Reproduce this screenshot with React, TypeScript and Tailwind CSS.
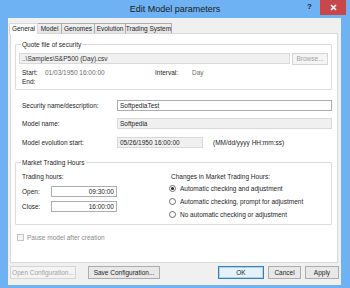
import React from "react";

function Group({ title, className, children }: { title: string; className?: string; children: React.ReactNode }) {
  return (
    <div className={"border border-[#dcdcdc] rounded-[1px] " + (className ?? "")}>
      <div className="h-0 overflow-visible">
        <span className="relative -top-[5px] ml-[5px] bg-white px-[1px] leading-[9px] text-[#1e1e1e]">{title}</span>
      </div>
      {children}
    </div>
  );
}

function Radio({ checked, label }: { checked?: boolean; label: string }) {
  return (
    <div className="flex h-[13px] items-center">
      <span className="flex h-[7px] w-[7px] items-center justify-center rounded-full border border-[#707070] bg-white">
        {checked && <span className="h-[3px] w-[3px] rounded-full bg-[#222]" />}
      </span>
      <span className="ml-[4px] text-[#1e1e1e]">{label}</span>
    </div>
  );
}

function Btn({ children, w, disabled, def }: { children: React.ReactNode; w: string; disabled?: boolean; def?: boolean }) {
  return (
    <div
      className={
        "flex h-[13px] items-center justify-center whitespace-nowrap " +
        w +
        (disabled
          ? " border border-[#d5d5d5] bg-[#f4f4f4] text-[#a3a3a3]"
          : def
          ? " border border-[#3c7fb1] bg-[#e5f1fb] text-[#1e1e1e] shadow-[inset_0_0_0_1px_#a9d3f5]"
          : " border border-[#acacac] bg-[#e8e8e8] text-[#1e1e1e]")
      }
    >
      {children}
    </div>
  );
}

const tabs = ["General", "Model", "Genomes", "Evolution", "Trading System"];
const tabW = ["w-[29px]", "w-[25px]", "w-[34px]", "w-[32px]", "w-[47px]"];

export default function App() {
  return (
    <div className="flex h-[288px] w-[350px] flex-col overflow-hidden bg-[#6fb2f3] font-['Liberation_Sans',Arial,sans-serif] text-[6.5px] text-[#1e1e1e]">
      {/* title bar */}
      <div className="grid h-[18px] shrink-0 grid-cols-[1fr_auto_1fr]">
        <div />
        <div className="pt-[3px] text-[9px] leading-[12px] text-[#1a1a1a]">Edit Model parameters</div>
        <div className="flex items-start justify-end pr-[4px]">
          <span className="mr-[8px] mt-[2px] text-[8px] font-bold leading-[10px] text-[#222]">?</span>
          <div className="flex h-[15px] w-[26px] items-center justify-center bg-[#c7484a]">
            <svg width="7" height="7" viewBox="0 0 7 7">
              <path d="M1 1L6 6M6 1L1 6" stroke="white" strokeWidth="1.6" />
            </svg>
          </div>
        </div>
      </div>

      {/* client */}
      <div className="ml-[8px] h-[267px] w-[333px] shrink-0 bg-[#f0f0f0] pl-[2px] pt-[4px]">
        {/* tabs */}
        <div className="flex h-[11px] items-end">
          {tabs.map((t, i) =>
            i === 0 ? (
              <div
                key={t}
                className={"relative z-10 -mb-[1px] ml-[-1px] flex h-[11px] items-center justify-center whitespace-nowrap border border-b-0 border-[#d9d9d9] bg-white " + tabW[i]}
              >
                {t}
              </div>
            ) : (
              <div
                key={t}
                className={"-ml-[1px] flex h-[10px] items-center justify-center whitespace-nowrap border border-b-0 border-[#acacac] bg-gradient-to-b from-[#f0f0f0] to-[#e5e5e5] " + tabW[i]}
              >
                {t}
              </div>
            )
          )}
        </div>

        {/* panel */}
        <div className="h-[230px] w-[328px] border border-[#d9d9d9] bg-white">
          <Group title="Quote file of security" className="ml-[4px] mt-[10px] h-[46px] w-[317px]">
            <div className="ml-[3px] mt-[8px] flex items-start">
              <div className="flex h-[11px] w-[271px] items-center border border-[#d9d9d9] bg-[#f0f0f0] pl-[2px] text-[#333]">
                ..\Samples\S&amp;P500 (Day).csv
              </div>
              <div className="ml-[2px] flex h-[12px] w-[36px] items-center justify-center border border-[#d5d5d5] bg-[#f4f4f4] text-[#a3a3a3]">
                Browse...
              </div>
            </div>
            <div className="ml-[6px] mt-[3px] flex leading-[9px]">
              <span className="w-[23px]">Start:</span>
              <span className="w-[110px] text-[#6d6d6d]">01/03/1950 16:00:00</span>
              <span className="w-[37px]">Interval:</span>
              <span className="text-[#6d6d6d]">Day</span>
            </div>
            <div className="ml-[6px] leading-[9px]">End:</div>
          </Group>

          <div className="ml-[11px] mt-[10px] flex items-center">
            <span className="w-[95px]">Security name/description:</span>
            <div className="flex h-[11px] w-[215px] items-center border border-[#abadb3] bg-white pl-[2px]">SoftpediaTest</div>
          </div>
          <div className="ml-[11px] mt-[7px] flex items-center">
            <span className="w-[95px]">Model name:</span>
            <div className="flex h-[11px] w-[215px] items-center border border-[#d9d9d9] bg-[#f0f0f0] pl-[2px]">Softpedia</div>
          </div>
          <div className="ml-[11px] mt-[8px] flex items-center">
            <span className="w-[95px]">Model evolution start:</span>
            <div className="flex h-[11px] w-[86px] items-center border border-[#d9d9d9] bg-[#f0f0f0] pl-[2px]">05/26/1950 16:00:00</div>
            <span className="ml-[10px]">(MM/dd/yyyy HH:mm:ss)</span>
          </div>

          <Group title="Market Trading Hours" className="ml-[4px] mt-[14px] h-[63px] w-[317px]">
            <div className="mt-[9px] flex">
              <div className="ml-[6px] w-[149px]">
                <div className="leading-[9px]">Trading hours:</div>
                <div className="mt-[5px] flex items-center">
                  <span className="w-[29px]">Open:</span>
                  <div className="flex h-[11px] w-[66px] items-center justify-end border border-[#abadb3] bg-white pr-[2px]">09:30:00</div>
                </div>
                <div className="mt-[4px] flex items-center">
                  <span className="w-[29px]">Close:</span>
                  <div className="flex h-[11px] w-[66px] items-center justify-end border border-[#abadb3] bg-white pr-[2px]">16:00:00</div>
                </div>
              </div>
              <div>
                <div className="leading-[9px]">Changes in Market Trading Hours:</div>
                <div className="-ml-[2px] mt-[1px]">
                  <Radio checked label="Automatic checking and adjustment" />
                  <Radio label="Automatic checking, prompt for adjustment" />
                  <Radio label="No automatic checking or adjustment" />
                </div>
              </div>
            </div>
          </Group>

          <div className="ml-[6px] mt-[8px] flex items-center">
            <span className="h-[7px] w-[7px] border border-[#c5c5c5] bg-[#f4f4f4]" />
            <span className="ml-[3px] text-[#8a8a8a]">Pause model after creation</span>
          </div>
        </div>

        {/* buttons */}
        <div className="mt-[3px] flex">
          <Btn w="w-[66px]" disabled>Open Configuration...</Btn>
          <div className="ml-[12px]">
            <Btn w="w-[72px]">Save Configuration...</Btn>
          </div>
          <div className="ml-[58px]">
            <Btn w="w-[46px]" def>OK</Btn>
          </div>
          <div className="ml-[4px]">
            <Btn w="w-[33px]">Cancel</Btn>
          </div>
          <div className="ml-[4px]">
            <Btn w="w-[34px]">Apply</Btn>
          </div>
        </div>
      </div>
    </div>
  );
}
